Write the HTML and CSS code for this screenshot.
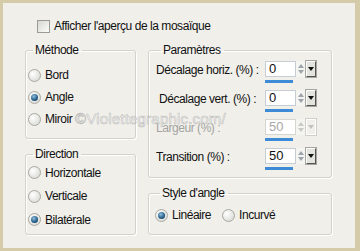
FILE: index.html
```html
<!DOCTYPE html>
<html lang="fr">
<head>
    <meta charset="UTF-8">
    <meta name="viewport" content="width=device-width, initial-scale=1.0">
    <title>Mosaïque</title>
    <link rel="stylesheet" href="styles.css">
</head>
<body>
    <div class="panel">
        <label class="check-row">
            <span class="checkbox"></span>
            <span>Afficher l'aperçu de la mosaïque</span>
        </label>

        <div class="cols">
            <div class="col col-left">
                <fieldset class="box methode">
                    <legend>Méthode</legend>
                    <div class="radio-row"><span class="radio"></span>Bord</div>
                    <div class="radio-row"><span class="radio on"></span>Angle</div>
                    <div class="radio-row"><span class="radio"></span>Miroir</div>
                </fieldset>
                <fieldset class="box direction">
                    <legend>Direction</legend>
                    <div class="radio-row"><span class="radio"></span>Horizontale</div>
                    <div class="radio-row"><span class="radio"></span>Verticale</div>
                    <div class="radio-row"><span class="radio on"></span>Bilatérale</div>
                </fieldset>
            </div>

            <div class="col col-right">
                <fieldset class="box params">
                    <legend>Paramètres</legend>
                    <div class="param">
                        <span class="param-label">Décalage horiz. (%) :</span>
                        <div class="spin">
                            <span class="field">0</span>
                            <span class="arrows"><i class="up"></i><i class="down"></i></span>
                            <span class="drop"></span>
                            <span class="bar"></span>
                        </div>
                    </div>
                    <div class="param">
                        <span class="param-label shift">Décalage vert. (%) :</span>
                        <div class="spin">
                            <span class="field">0</span>
                            <span class="arrows"><i class="up"></i><i class="down"></i></span>
                            <span class="drop"></span>
                            <span class="bar"></span>
                        </div>
                    </div>
                    <div class="param disabled">
                        <span class="param-label">Largeur (%) :</span>
                        <div class="spin">
                            <span class="field">50</span>
                            <span class="arrows"><i class="up"></i><i class="down"></i></span>
                            <span class="drop"></span>
                            <span class="bar"></span>
                        </div>
                    </div>
                    <div class="param">
                        <span class="param-label">Transition (%) :</span>
                        <div class="spin">
                            <span class="field">50</span>
                            <span class="arrows"><i class="up"></i><i class="down"></i></span>
                            <span class="drop"></span>
                            <span class="bar"></span>
                        </div>
                    </div>
                </fieldset>
                <fieldset class="box style">
                    <legend>Style d'angle</legend>
                    <div class="inline-radios">
                        <div class="radio-row"><span class="radio on"></span>Linéaire</div>
                        <div class="radio-row"><span class="radio"></span>Incurvé</div>
                    </div>
                </fieldset>
            </div>
        </div>

        <div class="watermark">©Violettegraphic.com/</div>
    </div>
</body>
</html>
```

FILE: styles.css
```css
body {
    margin: 0;
    background: #d5cba9;
    font-family: "Liberation Sans", Arial, sans-serif;
    font-size: 12px;
    letter-spacing: -0.45px;
    color: #111;
}
.panel {
    position: relative;
    width: 352px;
    height: 245px;
    margin: 3px 5px 3px 3px;
    padding-top: 17px;
    box-sizing: border-box;
    background: #f0efea;
}
.check-row {
    display: flex;
    align-items: center;
    gap: 4px;
    margin-left: 34px;
    height: 13px;
    line-height: 13px;
}
.checkbox {
    width: 11px;
    height: 11px;
    border: 1px solid #9a9a96;
    background: linear-gradient(135deg, #d8d8d2, #fbfbf8);
}
.cols {
    display: flex;
    gap: 12px;
    margin-top: 10px;
    padding-left: 22px;
}
.col {
    display: flex;
    flex-direction: column;
    gap: 8px;
}
.col-left { width: 111px; }
.col-right { width: 184px; }

.box {
    margin: 0;
    padding: 0 0 0 2px;
    box-sizing: border-box;
    border: 1px solid #d3d3c9;
    border-radius: 3px;
    box-shadow: inset 1px 1px 0 #fff, 1px 1px 0 #fff;
}
.box legend {
    margin-left: 5px;
    padding: 0 3px 0 2px;
    line-height: 14px;
}
.methode { height: 96px; padding-top: 7px; }
.direction { height: 88px; }
.methode .radio-row { height: 22px; }
.direction .radio-row { height: 23.5px; }
.params { height: 135px; padding: 4px 0 0 7px; }
.style { height: 49px; padding: 6px 0 0 6px; }

.radio-row {
    display: flex;
    align-items: center;
    gap: 4px;
}
.radio {
    position: relative;
    width: 11px;
    height: 11px;
    border: 1px solid #a9a9a4;
    border-radius: 50%;
    background: radial-gradient(circle at 35% 35%, #ffffff, #d2d2cc);
}
.radio.on::after {
    content: "";
    position: absolute;
    left: 2px;
    top: 2px;
    width: 7px;
    height: 7px;
    border-radius: 50%;
    background: radial-gradient(circle at 40% 35%, #8fc0e2, #235a82 60%, #163a55);
}
.inline-radios {
    display: flex;
    gap: 11px;
}
.inline-radios .radio-row { height: 18px; }

.param {
    display: grid;
    grid-template-columns: 109px auto;
    height: 29px;
}
.param-label {
    line-height: 16px;
    padding-top: 1px;
    white-space: nowrap;
}
.param-label.shift { padding-left: 3px; }
.disabled { color: #a3a3a0; }

.spin {
    display: grid;
    grid-template-columns: 31px 10px 10px;
    grid-template-rows: 16px 3px;
    row-gap: 3px;
    letter-spacing: 0;
}
.field {
    box-sizing: border-box;
    border: 1px solid #c7cdd4;
    background: #fff;
    padding-left: 3px;
    line-height: 14px;
    font-size: 13px;
}
.arrows {
    display: flex;
    flex-direction: column;
    justify-content: center;
    align-items: center;
    gap: 2px;
    background: #f4f4f0;
    border-right: 1px solid #fff;
}
.arrows i {
    width: 0;
    height: 0;
    border-left: 3px solid transparent;
    border-right: 3px solid transparent;
}
.arrows .up { border-bottom: 4px solid #9da3ab; }
.arrows .down { border-top: 4px solid #9da3ab; }
.drop {
    position: relative;
    box-sizing: border-box;
    border: 1px solid #fff;
    border-right-color: #555;
    border-bottom-color: #555;
    outline: 1px solid #a6a6a0;
    background: #e4e4de;
}
.drop::after {
    content: "";
    position: absolute;
    left: 1px;
    top: 5px;
    border-left: 3.5px solid transparent;
    border-right: 3.5px solid transparent;
    border-top: 4px solid #111;
}
.bar {
    background: #3d8ad6;
    width: 28px;
}
.disabled .field { color: #a8a8a4; border-color: #d6d6d0; }
.disabled .arrows .up { border-bottom-color: #c8c8c4; }
.disabled .arrows .down { border-top-color: #c8c8c4; }
.disabled .drop { border-color: #fff; outline-color: #d0d0ca; background: #f0efea; }
.disabled .drop::after { border-top-color: #c0c0bc; }

.watermark {
    position: absolute;
    left: 72px;
    top: 107px;
    font-size: 15px;
    letter-spacing: 0.2px;
    color: rgba(255, 255, 255, 0.6);
    -webkit-text-stroke: 0.6px rgba(150, 150, 150, 0.6);
    pointer-events: none;
}
```
